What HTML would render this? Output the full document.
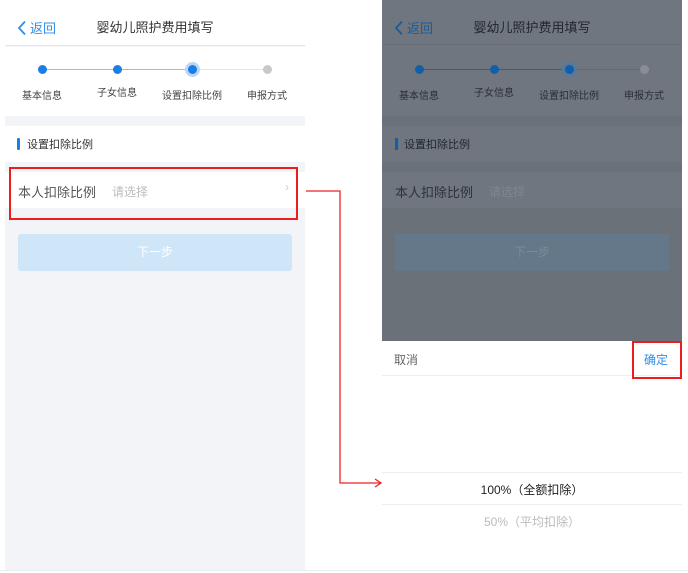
<!DOCTYPE html>
<html><head><meta charset="utf-8"><style>
*{margin:0;padding:0;box-sizing:border-box}
body{width:688px;height:573px;background:#fff;position:relative;overflow:hidden;font-family:"Liberation Sans","Noto Sans CJK SC",sans-serif}
.abs{position:absolute}
.panel{position:absolute;top:0;width:300px;height:570px;background:#f3f4f8;overflow:hidden}
.hdr{position:absolute;left:0;top:0;width:300px;height:46px;background:#fff;border-bottom:1px solid #e8e8ec}
.back{position:absolute;left:25px;top:18px;font-size:13px;color:#2f8ee8}
.title{position:absolute;left:0;width:300px;top:17px;text-align:center;font-size:13px;color:#333}
.steps{position:absolute;left:0;top:47px;width:300px;height:69px;background:#fff}
.line{position:absolute;top:22px;height:1px}
.dot{position:absolute;top:18px;width:9px;height:9px;border-radius:50%;background:#1a7ee6}
.lbl{position:absolute;top:40px;font-size:10px;color:#444;width:70px;text-align:center}
.sec{position:absolute;left:0;top:126px;width:300px;height:36px;background:#fff}
.row{position:absolute;left:0;top:172px;width:300px;height:36px;background:#fff}
.btn{position:absolute;left:13px;top:234px;width:274px;height:37px;background:#cfe6f8;border-radius:3px;color:#fff;font-size:12px;text-align:center;line-height:37px}
.red{position:absolute;border:2px solid #ee1c1c}
</style></head><body>

<!-- LEFT -->
<div class="panel" style="left:5px">
 <div class="hdr"><div class="title">婴幼儿照护费用填写</div>
  <svg class="abs" style="left:12px;top:20px" width="10" height="16"><path d="M8 1.5 L2 8 L8 14.5" fill="none" stroke="#2f8ee8" stroke-width="1.8"/></svg>
  <div class="back">返回</div></div>
 <div class="steps">
  <div class="line" style="left:38px;width:150px;background:#8cc0f0"></div>
  <div class="line" style="left:188px;width:75px;background:#e2e4e8"></div>
  <div class="dot" style="left:33px"></div>
  <div class="dot" style="left:108px"></div>
  <div class="dot" style="left:183px;box-shadow:0 0 0 3px #b8d8f6"></div>
  <div class="dot" style="left:258px;background:#c6c8cc"></div>
  <div class="lbl" style="left:2px">基本信息</div>
  <div class="lbl" style="left:77px;top:37px">子女信息</div>
  <div class="lbl" style="left:152px">设置扣除比例</div>
  <div class="lbl" style="left:227px">申报方式</div>
 </div>
 <div class="sec"><div class="abs" style="left:12px;top:12px;width:3px;height:12px;background:#1a7ee6;border-radius:1px"></div><div class="abs" style="left:22px;top:10px;font-size:11px;color:#333">设置扣除比例</div></div>
 <div class="row"><div class="abs" style="left:13px;top:10px;font-size:13px;color:#555">本人扣除比例</div><div class="abs" style="left:107px;top:11px;font-size:12px;color:#bbb">请选择</div><div class="abs" style="left:280px;top:8px;font-size:12px;color:#ccc">&#x203A;</div></div>
 <div class="btn">下一步</div>
</div>
<div class="red" style="left:9px;top:167px;width:289px;height:53px"></div>

<!-- RIGHT -->
<div class="panel" style="left:382px;background:#fff">
 <div class="abs" style="left:0;top:0;width:300px;height:341px;background:#6f7680"></div>
 <div class="abs" style="left:0;top:0;width:300px;height:45px;border-bottom:1px solid #676e77"></div>
 <div class="abs" style="left:0;top:17px;width:300px;text-align:center;font-size:13px;color:#22262c">婴幼儿照护费用填写</div>
 <svg class="abs" style="left:12px;top:20px" width="10" height="16"><path d="M8 1.5 L2 8 L8 14.5" fill="none" stroke="#1c5b96" stroke-width="1.8"/></svg>
 <div class="abs" style="left:25px;top:18px;font-size:13px;color:#1c5b96">返回</div>
 <div class="abs" style="left:38px;top:69px;width:150px;height:1px;background:#2f5f8c"></div>
 <div class="abs" style="left:188px;top:69px;width:75px;height:1px;background:#646a72"></div>
 <div class="abs" style="left:33px;top:65px;width:9px;height:9px;border-radius:50%;background:#135ea8"></div>
 <div class="abs" style="left:108px;top:65px;width:9px;height:9px;border-radius:50%;background:#135ea8"></div>
 <div class="abs" style="left:183px;top:65px;width:9px;height:9px;border-radius:50%;background:#135ea8;box-shadow:0 0 0 3px #56799c"></div>
 <div class="abs" style="left:258px;top:65px;width:9px;height:9px;border-radius:50%;background:#8a8e94"></div>
 <div class="abs" style="left:2px;top:87px;width:70px;text-align:center;font-size:10px;color:#2a2e34">基本信息</div>
 <div class="abs" style="left:77px;top:84px;width:70px;text-align:center;font-size:10px;color:#2a2e34">子女信息</div>
 <div class="abs" style="left:152px;top:87px;width:70px;text-align:center;font-size:10px;color:#2a2e34">设置扣除比例</div>
 <div class="abs" style="left:227px;top:87px;width:70px;text-align:center;font-size:10px;color:#2a2e34">申报方式</div>
 <div class="abs" style="left:0;top:116px;width:300px;height:10px;background:#6b7179"></div>
 <div class="abs" style="left:13px;top:138px;width:3px;height:12px;background:#135ea8"></div>
 <div class="abs" style="left:22px;top:136px;font-size:11px;color:#22262c">设置扣除比例</div>
 <div class="abs" style="left:0;top:162px;width:300px;height:10px;background:#6b7179"></div>
 <div class="abs" style="left:13px;top:182px;font-size:13px;color:#2e3238">本人扣除比例</div>
 <div class="abs" style="left:107px;top:183px;font-size:12px;color:#80868e">请选择</div>
 <div class="abs" style="left:0;top:208px;width:300px;height:133px;background:#6b7179"></div>
 <div class="abs" style="left:13px;top:234px;width:274px;height:37px;background:#647889;border-radius:3px;color:#7b8a98;font-size:12px;text-align:center;line-height:37px">下一步</div>
 <div class="abs" style="left:12px;top:351px;font-size:12px;color:#666">取消</div>
 <div class="abs" style="left:262px;top:351px;font-size:12px;color:#2f8ee8">确定</div>
 <div class="abs" style="left:0;top:375px;width:300px;height:1px;background:#eee"></div>
 <div class="abs" style="left:0;top:472px;width:300px;height:1px;background:#eee"></div>
 <div class="abs" style="left:0;top:504px;width:300px;height:1px;background:#eee"></div>
 <div class="abs" style="left:0;top:481px;width:300px;text-align:center;font-size:12px;color:#222">100%（全额扣除）</div>
 <div class="abs" style="left:0;top:513px;width:300px;text-align:center;font-size:12px;color:#bbb">50%（平均扣除）</div>
</div>
<div class="red" style="left:632px;top:341px;width:50px;height:38px"></div>
<div class="abs" style="left:0;top:570px;width:688px;height:1px;background:#eceef2"></div>

<svg class="abs" style="left:0;top:0" width="688" height="573">
 <path d="M306 191 H340 V483 H380" fill="none" stroke="#ee2222" stroke-width="1.3"/>
 <path d="M375 479 L381 483 L375 487" fill="none" stroke="#ee2222" stroke-width="1.3"/>
</svg>
</body></html>
